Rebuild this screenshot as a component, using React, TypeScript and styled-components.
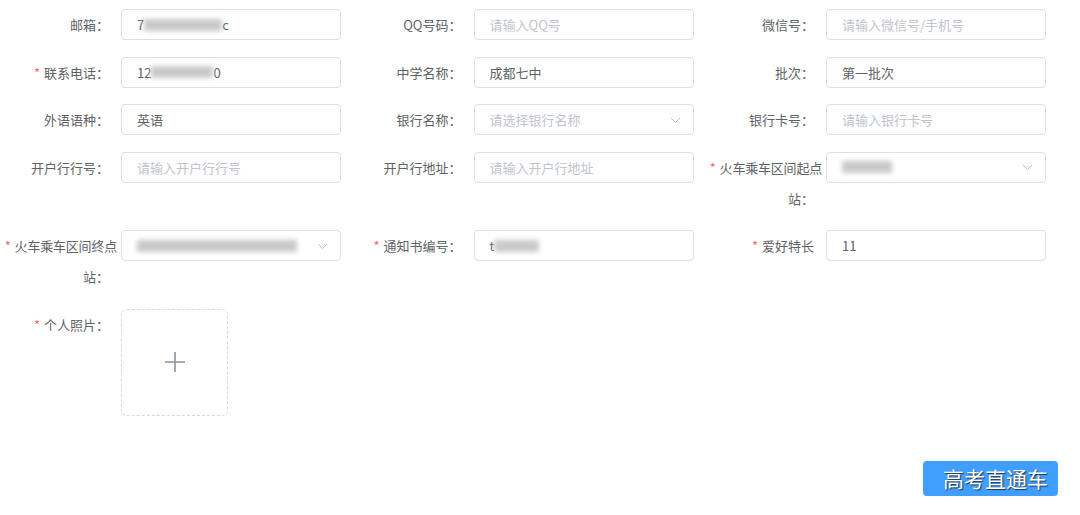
import React from 'react'
import styled, { createGlobalStyle } from 'styled-components'

const GlobalStyle = createGlobalStyle`
  html, body {
    margin: 0;
    padding: 0;
    background: #ffffff;
    font-family: "Noto Sans CJK SC", "Liberation Sans", sans-serif;
  }
`

const Page = styled.div`
  width: 1080px;
  height: 515px;
  box-sizing: border-box;
  padding: 9px 0 0 1px;
  overflow: hidden;
`

const FormGrid = styled.div`
  display: grid;
  grid-template-columns: repeat(3, 352.5px);
  row-gap: 16.5px;
  align-items: start;
`

const Item = styled.div`
  display: flex;
  align-items: flex-start;
`

const Label = styled.label`
  width: 120px;
  box-sizing: border-box;
  padding-right: 12px;
  text-align: right;
  font-size: 13px;
  line-height: 31px;
  color: #606266;
  white-space: nowrap;
  flex-shrink: 0;
`

const LongLine = styled.span`
  display: block;
  margin-right: -8px;
  letter-spacing: -0.2px;
`

const Star = styled.span`
  color: #f56c6c;
  margin-right: 4px;
`

const InputBox = styled.div<{ $select?: boolean }>`
  position: relative;
  width: 220px;
  height: 31px;
  box-sizing: border-box;
  border: 1px solid #dcdfe6;
  border-radius: 4px;
  padding: 0 ${p => (p.$select ? '30px' : '15px')} 0 15px;
  display: flex;
  align-items: center;
  font-size: 13px;
  color: #606266;
  white-space: nowrap;
  overflow: hidden;
`

const Placeholder = styled.span`
  color: #c0c4cc;
`

const Blur = styled.span<{ $w: number }>`
  display: inline-block;
  width: ${p => p.$w}px;
  height: 12px;
  background: #c9c9c9;
  filter: blur(2.5px);
  vertical-align: middle;
`

const Arrow = styled.svg`
  position: absolute;
  right: 12px;
  top: 50%;
  margin-top: -5px;
  width: 11px;
  height: 10px;
`

const Upload = styled.div`
  width: 107px;
  height: 107px;
  box-sizing: border-box;
  border: 1px dashed #d4d9e0;
  border-radius: 6px;
  display: flex;
  align-items: center;
  justify-content: center;
`

const Footer = styled.div`
  display: flex;
  justify-content: flex-end;
  padding: 45px 22px 0 0;
`

const Button = styled.button`
  width: 135px;
  height: 35px;
  border: none;
  border-radius: 4px;
  background: #409eff;
  color: #ffffff;
  font-family: "Noto Sans CJK SC", sans-serif;
  font-size: 21px;
  line-height: 35px;
  padding: 0 6px 0 16px;
  text-shadow: 1px 1px 1px rgba(40, 40, 40, 0.9);
  white-space: nowrap;
  cursor: pointer;
`

const Chevron = () => (
  <Arrow viewBox="0 0 11 10">
    <path d="M1 3 L5.5 7.5 L10 3" fill="none" stroke="#c0c4cc" strokeWidth="1" />
  </Arrow>
)

type Field = {
  label: React.ReactNode
  required?: boolean
  select?: boolean
  value?: React.ReactNode
  placeholder?: string
}

const fields: Field[] = [
  { label: '邮箱：', value: <>7<Blur $w={78} />c</> },
  { label: 'QQ号码：', placeholder: '请输入QQ号' },
  { label: '微信号：', placeholder: '请输入微信号/手机号' },
  { label: '联系电话：', required: true, value: <>12<Blur $w={62} />0</> },
  { label: '中学名称：', value: '成都七中' },
  { label: '批次：', value: '第一批次' },
  { label: '外语语种：', value: '英语' },
  { label: '银行名称：', select: true, placeholder: '请选择银行名称' },
  { label: '银行卡号：', placeholder: '请输入银行卡号' },
  { label: '开户行行号：', placeholder: '请输入开户行行号' },
  { label: '开户行地址：', placeholder: '请输入开户行地址' },
  {
    label: <><LongLine><Star>*</Star>火车乘车区间起点</LongLine>站：</>,
    select: true,
    value: <Blur $w={50} />,
  },
  {
    label: <><LongLine><Star>*</Star>火车乘车区间终点</LongLine>站：</>,
    select: true,
    value: <Blur $w={160} />,
  },
  { label: '通知书编号：', required: true, value: <>t<Blur $w={45} /></> },
  { label: '爱好特长', required: true, value: '11' },
]

export default function App() {
  return (
    <Page>
      <GlobalStyle />
      <FormGrid>
        {fields.map((f, i) => (
          <Item key={i}>
            <Label>
              {f.required && <Star>*</Star>}
              {f.label}
            </Label>
            <InputBox $select={f.select}>
              {f.value ?? <Placeholder>{f.placeholder}</Placeholder>}
              {f.select && <Chevron />}
            </InputBox>
          </Item>
        ))}
        <Item>
          <Label>
            <Star>*</Star>个人照片：
          </Label>
          <Upload>
            <svg width="22" height="22" viewBox="0 0 22 22">
              <path d="M11 1 V21 M1 11 H21" stroke="#8c939d" strokeWidth="1.6" fill="none" />
            </svg>
          </Upload>
        </Item>
      </FormGrid>
      <Footer>
        <Button>高考直通车</Button>
      </Footer>
    </Page>
  )
}
